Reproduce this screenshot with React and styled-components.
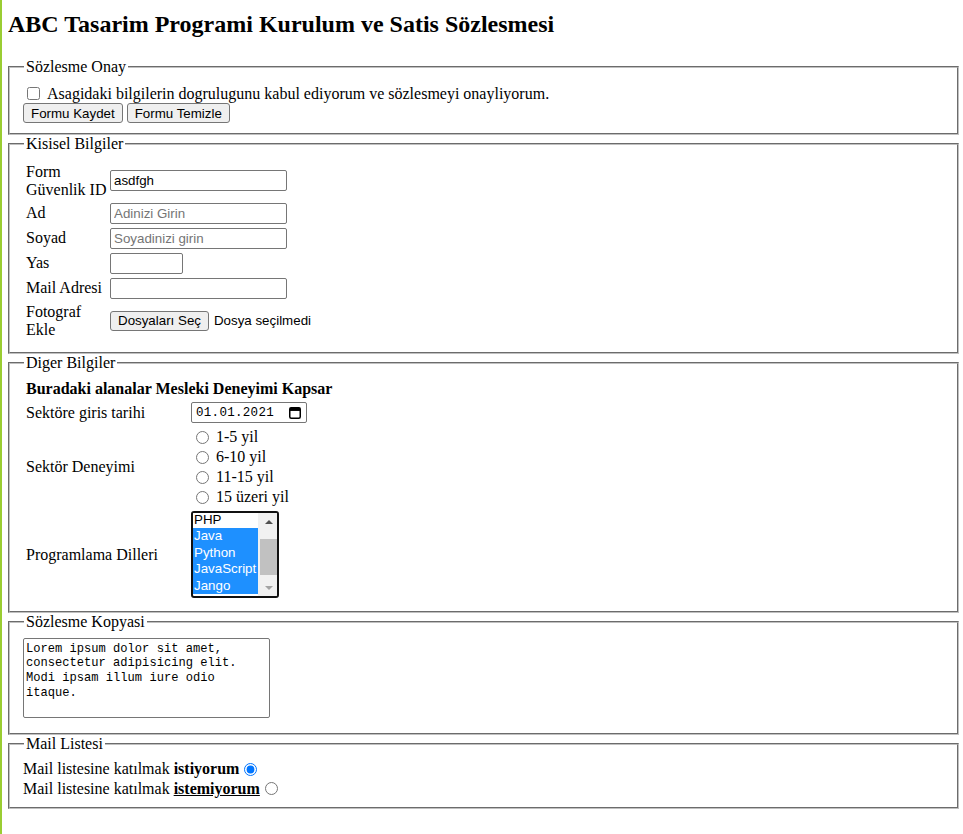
import React from 'react'
import styled, { createGlobalStyle } from 'styled-components'

const GlobalStyle = createGlobalStyle`
  html {
    min-height: 100%;
    border-left: 2px solid #9acd32;
    background: #fff;
  }
  body {
    margin: 8px 4px 8px 6px;
    font-family: "Liberation Serif", "Times New Roman", serif;
    font-size: 16px;
    color: #000;
  }
`

const Title = styled.h2`
  margin: 3px 0 20px;
  font-size: 24px;
  font-weight: bold;
  line-height: normal;
`

const Group = styled.fieldset`
  margin: 0;
  padding: ${p => p.$top ?? 7.6}px 12px ${p => p.$bottom ?? 10}px 13px;
  border: 2px groove #c0c0c0;
  min-width: min-content;
`

const Legend = styled.legend`
  margin-left: 1px;
  padding: 0 2px;
`

const Row = styled.div`
  display: flex;
  align-items: center;
  height: ${p => p.$h || 20}px;
  gap: ${p => p.$gap || 0}px;
`

const Check = styled.input`
  margin: 0 7px 0 4px;
  width: 13px;
  height: 13px;
`

const Radio = styled.input`
  margin: ${p => p.$after ? '0 0 0 5px' : '0 7px 0 5px'};
  width: 13px;
  height: 13px;
`

const Button = styled.button`
  box-sizing: border-box;
  height: 20px;
  padding: 0 7px;
  border: 1px solid #767676;
  border-radius: 3px;
  background: #efefef;
  color: #000;
  font: 13.333px "Liberation Sans", Arial, sans-serif;
`

const FormGrid = styled.div`
  display: grid;
  grid-template-columns: ${p => p.$label}px auto;
  justify-content: start;
  align-items: center;
  column-gap: 3px;
  row-gap: 4px;
  padding: ${p => p.$top ?? 3}px 3px 3px;
`

const Label = styled.div`
  line-height: normal;
  white-space: nowrap;
`

const GridHeading = styled.div`
  grid-column: 1 / -1;
  font-weight: bold;
`

const TextInput = styled.input`
  box-sizing: border-box;
  width: ${p => p.$w || 177}px;
  height: 21px;
  padding: 1px 3px;
  border: 1px solid #767676;
  border-radius: 2px;
  font: 13.333px "Liberation Sans", Arial, sans-serif;
  color: #000;
  background: #fff;

  &::placeholder {
    color: #757575;
  }
`

const FileRow = styled.div`
  display: flex;
  align-items: center;
  gap: 5px;
  font: 13.333px "Liberation Sans", Arial, sans-serif;
`

const DateBox = styled.div`
  box-sizing: border-box;
  width: 116px;
  height: 21px;
  display: flex;
  align-items: center;
  justify-content: space-between;
  padding: 0 5px 0 4px;
  border: 1px solid #767676;
  border-radius: 2px;
  font: 12.5px "Liberation Mono", "DejaVu Sans Mono", monospace;
  letter-spacing: 0.3px;
`

const RadioList = styled.div`
  display: flex;
  flex-direction: column;
`

const RadioItem = styled.label`
  display: flex;
  align-items: center;
  height: 20px;
`

const ListBox = styled.div`
  box-sizing: border-box;
  display: flex;
  width: 88px;
  height: 87px;
  border: 2px solid #111;
  border-radius: 3px;
  overflow: hidden;
  background: #fff;
`

const Options = styled.div`
  flex: 1;
  display: flex;
  flex-direction: column;
`

const Option = styled.div`
  height: ${p => p.$cut ? 15 : 16.5}px;
  padding: 0 1px;
  font: 13.333px "Liberation Sans", Arial, sans-serif;
  line-height: ${p => p.$cut ? 13 : 16.5}px;
  white-space: nowrap;
  background: ${p => p.$selected ? '#1e90ff' : '#fff'};
  color: ${p => p.$selected ? '#fff' : '#000'};
`

const Track = styled.div`
  width: 19px;
  display: flex;
  flex-direction: column;
  background: #f1f1f1;
`

const ArrowButton = styled.div`
  height: 17px;
  display: flex;
  align-items: center;
  justify-content: center;
  padding-left: 2px;
`

const Arrow = styled.div`
  width: 0;
  height: 0;
  border-left: 4px solid transparent;
  border-right: 4px solid transparent;
  ${p => p.$down
    ? `border-top: 4px solid ${p.$color};`
    : `border-bottom: 4px solid ${p.$color};`}
`

const ThumbArea = styled.div`
  flex: 1;
  padding: 9px 0 0 2px;
`

const Thumb = styled.div`
  height: 36px;
  background: #c1c1c1;
`

const Copy = styled.textarea`
  display: block;
  box-sizing: border-box;
  width: 247px;
  height: 80px;
  margin: 0 0 5px;
  padding: 3px 2px 2px;
  border: 1px solid #767676;
  border-radius: 2px;
  font: 12.1px "Liberation Mono", "DejaVu Sans Mono", monospace;
  line-height: 14.7px;
  color: #000;
  resize: none;
`

const Emph = styled.b`
  text-decoration: ${p => p.$underline ? 'underline' : 'none'};
`

const CalendarIcon = () => (
  <svg width="12" height="12" viewBox="0 0 12 12">
    <rect x="0.75" y="0.75" width="10.5" height="10.5" rx="1.5" fill="none" stroke="#000" strokeWidth="1.5" />
    <rect x="0.75" y="0.75" width="10.5" height="3.2" fill="#000" />
  </svg>
)

const languages = [
  { name: 'PHP', selected: false, cut: true },
  { name: 'Java', selected: true },
  { name: 'Python', selected: true },
  { name: 'JavaScript', selected: true },
  { name: 'Jango', selected: true },
]

const experience = ['1-5 yil', '6-10 yil', '11-15 yil', '15 üzeri yil']

export default function App() {
  return (
    <>
      <GlobalStyle />
      <Title>ABC Tasarim Programi Kurulum ve Satis Sözlesmesi</Title>

      <Group>
        <Legend>Sözlesme Onay</Legend>
        <Row>
          <Check type="checkbox" id="onay" />
          <label htmlFor="onay">Asagidaki bilgilerin dogrulugunu kabul ediyorum ve sözlesmeyi onayliyorum.</label>
        </Row>
        <Row $h={19} $gap={4}>
          <Button type="button">Formu Kaydet</Button>
          <Button type="button">Formu Temizle</Button>
        </Row>
      </Group>

      <Group $top={7}>
        <Legend>Kisisel Bilgiler</Legend>
        <FormGrid $label={81}>
          <Label>Form<br />Güvenlik ID</Label>
          <TextInput defaultValue="asdfgh" />
          <Label>Ad</Label>
          <TextInput placeholder="Adinizi Girin" />
          <Label>Soyad</Label>
          <TextInput placeholder="Soyadinizi girin" />
          <Label>Yas</Label>
          <TextInput $w={73} />
          <Label>Mail Adresi</Label>
          <TextInput />
          <Label>Fotograf<br />Ekle</Label>
          <FileRow>
            <Button type="button">Dosyaları Seç</Button>
            <span>Dosya seçilmedi</span>
          </FileRow>
        </FormGrid>
      </Group>

      <Group $top={6.6}>
        <Legend>Diger Bilgiler</Legend>
        <FormGrid $label={162} $top={2}>
          <GridHeading>Buradaki alanalar Mesleki Deneyimi Kapsar</GridHeading>
          <Label>Sektöre giris tarihi</Label>
          <DateBox>
            <span>01.01.2021</span>
            <CalendarIcon />
          </DateBox>
          <Label>Sektör Deneyimi</Label>
          <RadioList>
            {experience.map(item => (
              <RadioItem key={item}>
                <Radio type="radio" name="deneyim" />
                {item}
              </RadioItem>
            ))}
          </RadioList>
          <Label>Programlama Dilleri</Label>
          <ListBox>
            <Options>
              {languages.map(lang => (
                <Option key={lang.name} $selected={lang.selected} $cut={lang.cut}>{lang.name}</Option>
              ))}
            </Options>
            <Track>
              <ArrowButton><Arrow $color="#505050" /></ArrowButton>
              <ThumbArea><Thumb /></ThumbArea>
              <ArrowButton><Arrow $down $color="#a3a3a3" /></ArrowButton>
            </Track>
          </ListBox>
        </FormGrid>
      </Group>

      <Group $top={6.6}>
        <Legend>Sözlesme Kopyasi</Legend>
        <Copy defaultValue="Lorem ipsum dolor sit amet, consectetur adipisicing elit. Modi ipsam illum iure odio itaque." />
      </Group>

      <Group $top={6.6} $bottom={9}>
        <Legend>Mail Listesi</Legend>
        <Row $h={19.5}>
          Mail listesine katılmak&nbsp;<Emph>istiyorum</Emph>
          <Radio type="radio" name="mail" $after defaultChecked />
        </Row>
        <Row $h={19.5}>
          Mail listesine katılmak&nbsp;<Emph $underline>istemiyorum</Emph>
          <Radio type="radio" name="mail" $after />
        </Row>
      </Group>
    </>
  )
}
